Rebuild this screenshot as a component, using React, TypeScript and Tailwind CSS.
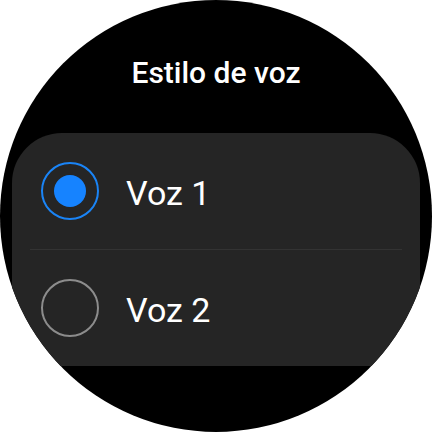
import React, { useState } from 'react';

interface Option {
    id: number;
    label: string;
}

const options: Option[] = [
    { id: 1, label: 'Voz 1' },
    { id: 2, label: 'Voz 2' },
];

const Radio: React.FC<{ checked: boolean }> = ({ checked }) => (
    <div
        className={`flex items-center justify-center w-[58px] h-[58px] rounded-full border-2 shrink-0 ${
            checked ? 'border-[#1a84f6]' : 'border-[#8c8c8c]'
        }`}
    >
        {checked && <div className="w-[32px] h-[32px] rounded-full bg-[#1683ff]" />}
    </div>
);

const App: React.FC = () => {
    const [selected, setSelected] = useState(1);

    return (
        <div className="w-[432px] h-[432px] bg-white" style={{ fontFamily: 'Roboto, "Noto Sans", sans-serif' }}>
            <div className="w-full h-full rounded-full bg-black overflow-hidden flex flex-col">
                <h1 className="pt-[55px] text-center text-white text-[30px] leading-[36px] font-medium">Estilo de voz</h1>
                <div className="mt-[42px] mx-[12px] h-[233px] rounded-t-[50px] bg-[#252525] flex flex-col">
                    {options.map((opt, i) => (
                        <React.Fragment key={opt.id}>
                            {i > 0 && <div className="mx-[18px] h-px bg-[#333333]" />}
                            <button
                                type="button"
                                onClick={() => setSelected(opt.id)}
                                className="flex items-center h-[116px] pl-[29px] gap-[27px] text-left"
                            >
                                <Radio checked={selected === opt.id} />
                                <span className="pt-[4px] text-white text-[34px] leading-none">{opt.label}</span>
                            </button>
                        </React.Fragment>
                    ))}
                </div>
            </div>
        </div>
    );
};

export default App;
